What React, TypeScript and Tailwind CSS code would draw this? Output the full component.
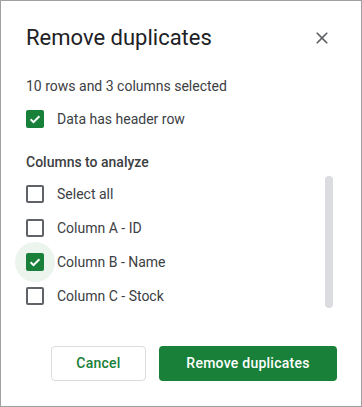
import React from 'react';

const rows = [
  { label: 'Select all', checked: false, focus: false },
  { label: 'Column A - ID', checked: false, focus: false },
  { label: 'Column B - Name', checked: true, focus: true },
  { label: 'Column C - Stock', checked: false, focus: false },
];

function Checkbox({ checked, focus }: { checked: boolean; focus?: boolean }) {
  return (
    <div
      className={`-m-[11px] flex h-[40px] w-[40px] shrink-0 items-center justify-center rounded-full ${
        focus ? 'bg-[#ecf4ee]' : ''
      }`}
    >
      {checked ? (
        <div className="flex h-[18px] w-[18px] items-center justify-center rounded-[2px] bg-[#188038]">
          <svg width="14" height="14" viewBox="0 0 14 14" fill="none">
            <path d="M2.6 7.2l2.9 2.9 5.9-5.9" stroke="white" strokeWidth="2" />
          </svg>
        </div>
      ) : (
        <div className="h-[18px] w-[18px] rounded-[2px] border-2 border-[#5f6368]" />
      )}
    </div>
  );
}

export default function App() {
  return (
    <div className="flex h-[407px] w-[362px] flex-col border border-[#a0a0a0] bg-white font-['Roboto',sans-serif] text-[#3c4043]">
      {/* Header */}
      <div className="flex items-center justify-between pl-[25px] pr-[29px] pt-[23px]">
        <h1 className="text-[22px] leading-[28px] text-[#202124]">Remove duplicates</h1>
        <svg width="20" height="20" viewBox="0 0 24 24" fill="#5f6368">
          <path d="M19 6.41L17.59 5 12 10.59 6.41 5 5 6.41 10.59 12 5 17.59 6.41 19 12 13.41 17.59 19 19 17.59 13.41 12z" />
        </svg>
      </div>

      <div className="pl-[25px]">
        <p className="mt-[24px] text-[14px] leading-[20px]">10 rows and 3 columns selected</p>

        <div className="mt-[13px] flex h-[20px] items-center gap-[13px]">
          <Checkbox checked />
          <span className="text-[14px]">Data has header row</span>
        </div>

        <p className="mt-[23px] text-[14px] font-medium leading-[20px]">Columns to analyze</p>
      </div>

      {/* Column list */}
      <div className="mt-[4px] flex h-[132px] pl-[25px] pr-[28px]">
        <div className="flex-1 pt-[1px]">
          {rows.map((r) => (
            <div key={r.label} className="flex h-[34px] items-center gap-[13px]">
              <Checkbox checked={r.checked} focus={r.focus} />
              <span className="text-[14px]">{r.label}</span>
            </div>
          ))}
        </div>
        <div className="w-[8px] rounded-full bg-[#dadce0]" />
      </div>

      {/* Actions */}
      <div className="mt-[38px] flex justify-end gap-[13px] pr-[24px]">
        <button className="h-[35px] w-[95px] rounded-[4px] border border-[#dadce0] text-[14px] font-medium tracking-[0.25px] text-[#188038]">
          Cancel
        </button>
        <button className="h-[35px] w-[178px] rounded-[4px] bg-[#188038] text-[14px] font-medium tracking-[0.25px] text-white">
          Remove duplicates
        </button>
      </div>
    </div>
  );
}
